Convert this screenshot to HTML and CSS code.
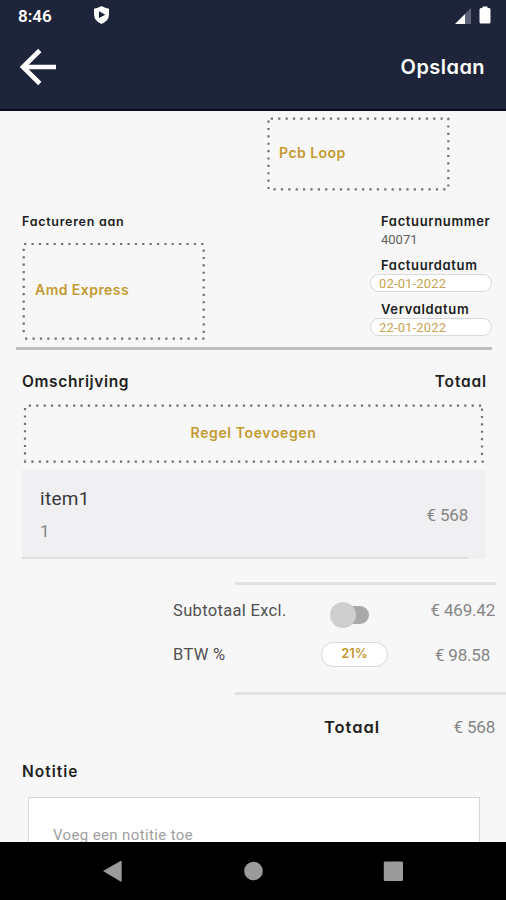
FILE: index.html
```html
<!DOCTYPE html>
<html lang="nl">
<head>
<meta charset="utf-8">
<meta name="viewport" content="width=device-width, initial-scale=1">
<title>Factuur</title>
<link rel="stylesheet" href="styles.css">
</head>
<body>
<div class="screen">
  <header class="topbar">
    <div class="status">
      <span class="clock">8:46</span>
      <svg class="shield" width="17" height="20" viewBox="0 0 17 20"><path d="M8.500 1 Q12 3.300 16 3.700 V9.500 Q15.800 16 8.500 19 Q1.200 16 1 9.500 V3.700 Q5 3.300 8.500 1Z" fill="#fff"/><path d="M6 6.300 L12.300 9.700 L6 13Z" fill="#1b2136"/></svg>
      <svg class="signal" width="16" height="16" viewBox="0 0 16 16"><path d="M0 16 L10 6 V16Z" fill="#fff"/><path d="M10 6 L16 0 V16 H10Z" fill="#5d6377"/></svg>
      <svg class="battery" width="12" height="18" viewBox="0 0 12 18"><path d="M3.500 0.500 H8.500 V2 H10 Q11.500 2 11.500 3.500 V16 Q11.500 17.500 10 17.500 H2 Q0.500 17.500 0.500 16 V3.500 Q0.500 2 2 2 H3.500Z" fill="#fff"/></svg>
    </div>
    <div class="actions">
      <svg class="back" width="38" height="38" viewBox="0 0 38 38" fill="none" stroke="#fff" stroke-width="4.600"><path d="M20.800 2.500 L4 19 L20.800 35.500 M4 19 H37"/></svg>
      <span class="save">Opslaan</span>
    </div>
  </header>

  <main class="page">
    <div class="dotbox company">
      <svg class="dots" width="183" height="74"><path d="M3.800 1.700H182M6.500 72.300H180M1.500 3.500V74M181.300 1V72"/></svg>
      <span class="gold pcb">Pcb Loop</span>
    </div>

    <section class="meta">
      <div class="client">
        <div class="label bill">Factureren aan</div>
        <div class="dotbox customer">
          <svg class="dots" width="183" height="98"><path d="M2.100 2H183M3.100 96.700H183M1.700 6.800V94M181.700 7.500V96"/></svg>
          <span class="gold amd">Amd Express</span>
        </div>
      </div>
      <div class="numbers">
        <div class="label l-nr">Factuurnummer</div>
        <div class="nr">40071</div>
        <div class="label l-fd">Factuurdatum</div>
        <div class="pill date">02-01-2022</div>
        <div class="label l-vd">Vervaldatum</div>
        <div class="pill date">22-01-2022</div>
      </div>
    </section>
    <div class="rule"></div>

    <div class="headings"><span class="heading h-om">Omschrijving</span><span class="heading h-to">Totaal</span></div>
    <div class="dotbox addline">
      <svg class="dots" width="461" height="60"><path d="M5.800 2.700H459M1 58.700H461M2 5V57M459 5.500V57"/></svg>
      <span class="gold regel">Regel Toevoegen</span>
    </div>
    <div class="item">
      <div class="item-text"><div class="item-name">item1</div><div class="item-qty">1</div></div>
      <div class="amount a-item">€ 568</div>
      <div class="item-line"></div>
    </div>

    <section class="totals">
      <div class="line short"></div>
      <div class="row r-sub">
        <span class="name n-sub">Subtotaal Excl.</span>
        <span class="switch"><i class="track"></i><i class="thumb"></i></span>
        <span class="amount a-sub">€ 469.42</span>
      </div>
      <div class="row r-btw">
        <span class="name n-btw">BTW %</span>
        <span class="pill pct">21%</span>
        <span class="amount a-btw">€ 98.58</span>
      </div>
      <div class="line"></div>
      <div class="row r-tot">
        <span class="heading h-sum">Totaal</span>
        <span class="amount a-tot">€ 568</span>
      </div>
    </section>

    <div class="heading h-note">Notitie</div>
    <div class="note"><span class="hint">Voeg een notitie toe</span></div>
  </main>

  <nav class="nav">
    <svg width="506" height="58" viewBox="0 0 506 58" fill="#9b9b9b"><path d="M103 29 L120.500 19 Q121.700 18.500 121.700 20 V38.500 Q121.700 40 120.500 39.500Z"/><circle cx="253.500" cy="29" r="9.300"/><rect x="383.800" y="19.500" width="19.200" height="19.500" rx="1.300"/></svg>
  </nav>
</div>
</body>
</html>
```
FILE: styles.css
```css
* { box-sizing: border-box; }
body { margin: 0; background: #f7f7f7; font-family: Roboto, "Liberation Sans", sans-serif; }
svg { display: block; flex: none; }
.screen { width: 506px; height: 900px; display: flex; flex-direction: column; overflow: hidden; white-space: nowrap; }

.topbar { height: 111px; flex: none; background: #1e243a; border-bottom: 2px solid #090b20; color: #fff; }
.status { display: flex; height: 32px; padding: 0 15px 0 18px; align-items: flex-start; }
.clock { font-size: 17px; line-height: 20px; font-weight: 600; width: 75px; margin-top: 6px; }
.shield { margin-top: 5px; }
.signal { margin: 8px 8px 0 auto; }
.battery { margin-top: 6px; }
.actions { display: flex; justify-content: space-between; align-items: center; height: 70px; padding: 0 21px 0 19px; }
.save { font: 600 20px/28px Inter, sans-serif; font-feature-settings: "cv11"; letter-spacing: 0.450px; }

.page { height: 731px; flex: none; overflow: hidden; background: #f7f7f7; }
.dotbox { position: relative; display: flex; align-items: center; }
.dots { position: absolute; left: 0; top: 0; stroke: #707070; stroke-width: 2.200; stroke-dasharray: 2.200 5.180; fill: none; }
.gold { font: 600 14px/20px Inter, sans-serif; font-feature-settings: "cv11"; color: #c39a30; position: relative; top: -1px; letter-spacing: 0.450px; }
.regel { letter-spacing: 0.620px; top: 0; }
.company { width: 183px; height: 74px; margin: 6px 0 0 267px; padding-left: 12px; }

.meta { display: flex; justify-content: space-between; padding: 20px 14px 0 22px; height: 156px; }
.label { font: 600 12.500px/21px Inter, sans-serif; font-feature-settings: "cv11"; color: #1c1c1c; letter-spacing: 0.720px; height: 20px; }
.customer { width: 183px; height: 98px; margin-top: 11px; padding-left: 13px; }
.numbers { width: 122px; }
.numbers .label, .nr { padding-left: 11px; }
.numbers .label { font-size: 13px; letter-spacing: 0.650px; }
.nr { font-size: 13px; line-height: 17px; height: 24px; color: #606060; }
.pill { background: #fff; border: 1px solid #d9d9d9; border-radius: 13px; }
.numbers .l-fd { height: 19px; }
.numbers .l-vd { margin-top: 7px; height: 19px; }
.date { width: 122px; height: 18px; padding-left: 8px; color: #c6a453; font-size: 13px; line-height: 17px; letter-spacing: 0.150px; }
.rule { height: 3px; margin: 0 14px 0 16px; background: #bfbfbf; }

.headings { display: flex; justify-content: space-between; padding: 20px 19px 0 22px; height: 53px; }
.heading { font: 600 15.500px/24px Inter, sans-serif; font-feature-settings: "cv11"; color: #1f1f1f; letter-spacing: 0.620px; }
.h-to { letter-spacing: 0.850px; }
.addline { width: 461px; height: 60px; margin-left: 23px; justify-content: center; }
.item { position: relative; display: flex; justify-content: space-between; align-items: center; height: 89px; width: 464px; margin: 7px 0 0 22px; padding: 0 18px; background: #f0f0f2; }
.item-name { font-size: 19px; line-height: 24px; color: #3a3a3a; letter-spacing: 0.300px; margin-top: 1px; }
.item-qty { font-size: 17px; line-height: 24px; margin-top: 8px; color: #858585; }
.item-line { position: absolute; left: 0; bottom: 0; width: 446px; height: 2px; background: #dfdfe1; }
.amount { font-size: 17px; line-height: 24px; color: #858585; letter-spacing: -0.200px; }

.totals { padding-top: 23px; }
.line { height: 3px; margin-left: 235px; background: #e1e1e1; }
.short { width: 261px; }
.row { display: flex; align-items: center; padding: 0 11px 0 173px; }
.name { width: 148px; font-size: 16.500px; line-height: 24px; color: #505050; letter-spacing: 0.330px; padding-top: 2px; }
.row .amount { margin-left: auto; }
.r-sub { height: 44px; margin-top: 3px; }
.switch { position: relative; width: 67px; height: 26px; margin-top: 10px; }
.track { position: absolute; left: 14px; top: 4px; width: 34px; height: 18px; border-radius: 9px; background: #a9a9a9; }
.thumb { position: absolute; left: 9px; top: 0; width: 26px; height: 26px; border-radius: 50%; background: #cecece; }
.r-btw { height: 44px; }
.row .a-btw { margin-right: 5px; padding-top: 1px; }
.r-btw + .line { margin-top: 16px; }
.pct { width: 67px; height: 25px; text-align: center; font: 600 13px/21px Inter, sans-serif; color: #c39a30; }
.r-tot { height: 44px; margin-top: 10px; padding-left: 324px; }
.h-sum { font-size: 16.500px; letter-spacing: 0.950px; }
.h-note { margin: 11px 0 0 22px; letter-spacing: 1px; }
.note { height: 80px; width: 452px; margin: 13px 0 0 28px; padding: 27px 0 0 24px; background: #fff; border: 1px solid #d6d6d6; }
.hint { font-size: 15px; line-height: 18px; color: #a0a0a0; letter-spacing: 0.370px; }
.nav { height: 58px; flex: none; background: #000; }
```
